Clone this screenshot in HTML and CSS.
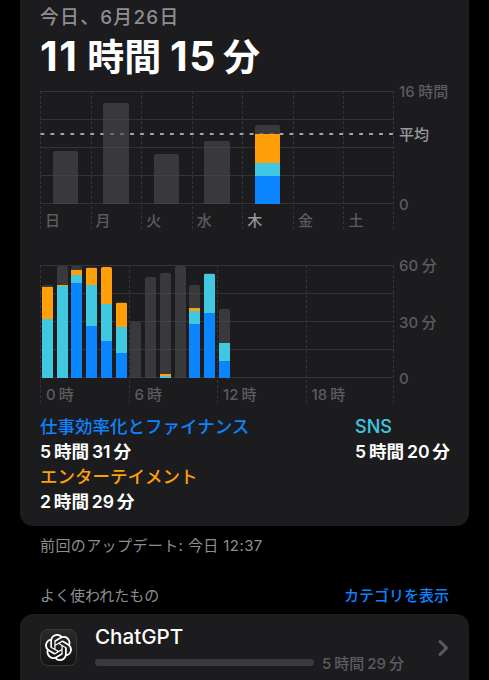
FILE: index.html
```
<!DOCTYPE html>
<html lang="ja">
<head>
    <meta charset="UTF-8">
    <meta name="viewport" content="width=device-width, initial-scale=1.0">
    <title>スクリーンタイム</title>
    <link rel="stylesheet" href="styles.css">
</head>
<body>
    <section class="card summary">
        <div class="date">今日、6月26日</div>
        <h1 class="total"><span class="num">11</span> 時間 <span class="num">15</span>&thinsp;分</h1>

        <div class="chart week">
            <div class="plot">
                <div class="columns" id="weekColumns"></div>
                <svg class="average-line" width="353" height="2"><path d="M0.5 1H353" stroke="#a5a5a9" stroke-width="2" stroke-dasharray="3.8 6.16"/></svg>
                <div class="bars" id="weekBars"></div>
            </div>
            <div class="axis">
                <span>16 時間</span>
                <span>0</span>
                <span class="average-label">平均</span>
            </div>
        </div>

        <div class="chart day">
            <div class="plot">
                <div class="columns" id="dayColumns"></div>
                <div class="bars" id="dayBars"></div>
            </div>
            <div class="axis">
                <span>60 分</span>
                <span>30 分</span>
                <span>0</span>
            </div>
        </div>

        <div class="categories">
            <div class="category">
                <div class="name productivity">仕事効率化とファイナンス</div>
                <div class="time">5 時間 31 分</div>
            </div>
            <div class="category">
                <div class="name social">SNS</div>
                <div class="time">5 時間 20 分</div>
            </div>
            <div class="category">
                <div class="name entertainment">エンターテイメント</div>
                <div class="time">2 時間 29 分</div>
            </div>
        </div>
    </section>

    <p class="updated">前回のアップデート: 今日 12:37</p>

    <div class="list-header">
        <span>よく使われたもの</span>
        <a class="toggle">カテゴリを表示</a>
    </div>

    <section class="card app">
        <div class="app-icon">
            <svg width="27" height="27" viewBox="0 0 24 24" fill="#fff"><path d="M22.2819 9.8211a5.9847 5.9847 0 0 0-.5157-4.9108 6.0462 6.0462 0 0 0-6.5098-2.9A6.0651 6.0651 0 0 0 4.9807 4.1818a5.9847 5.9847 0 0 0-3.9977 2.9 6.0462 6.0462 0 0 0 .7427 7.0966 5.98 5.98 0 0 0 .511 4.9107 6.051 6.051 0 0 0 6.5146 2.9001A5.9847 5.9847 0 0 0 13.2599 24a6.0557 6.0557 0 0 0 5.7718-4.2058 5.9894 5.9894 0 0 0 3.9977-2.9001 6.0557 6.0557 0 0 0-.7475-7.0729zm-9.022 12.6081a4.4755 4.4755 0 0 1-2.8764-1.0408l.1419-.0804 4.7783-2.7582a.7948.7948 0 0 0 .3927-.6813v-6.7369l2.02 1.1686a.071.071 0 0 1 .038.052v5.5826a4.504 4.504 0 0 1-4.4945 4.4944zm-9.6607-4.1254a4.4708 4.4708 0 0 1-.5346-3.0137l.142.0852 4.783 2.7582a.7712.7712 0 0 0 .7806 0l5.8428-3.3685v2.3324a.0804.0804 0 0 1-.0332.0615L9.74 19.9502a4.4992 4.4992 0 0 1-6.1408-1.6464zM2.3408 7.8956a4.485 4.485 0 0 1 2.3655-1.9728V11.6a.7664.7664 0 0 0 .3879.6765l5.8144 3.3543-2.0201 1.1685a.0757.0757 0 0 1-.071 0l-4.8303-2.7865A4.504 4.504 0 0 1 2.3408 7.872zm16.5963 3.8558L13.1038 8.364 15.1192 7.2a.0757.0757 0 0 1 .071 0l4.8303 2.7913a4.4944 4.4944 0 0 1-.6765 8.1042v-5.6772a.79.79 0 0 0-.407-.667zm2.0107-3.0231l-.142-.0852-4.7735-2.7818a.7759.7759 0 0 0-.7854 0L9.409 9.2297V6.8974a.0662.0662 0 0 1 .0284-.0615l4.8303-2.7866a4.4992 4.4992 0 0 1 6.6802 4.66zM8.3065 12.863l-2.02-1.1638a.0804.0804 0 0 1-.038-.0567V6.0742a4.4992 4.4992 0 0 1 7.3757-3.4537l-.142.0805L8.704 5.459a.7948.7948 0 0 0-.3927.6813zm1.0976-2.3654l2.602-1.4998 2.6069 1.4998v2.9994l-2.5974 1.4997-2.6067-1.4997Z"/></svg>
        </div>
        <div class="app-info">
            <div class="app-name">ChatGPT</div>
            <div class="usage">
                <div class="usage-bar"></div>
                <span class="usage-time">5 時間 29 分</span>
            </div>
        </div>
        <svg class="chevron" width="12" height="18" viewBox="0 0 12 18"><path d="M3 2.5L9.5 9L3 15.5" fill="none" stroke="#5b5b60" stroke-width="3" stroke-linecap="round" stroke-linejoin="round"/></svg>
    </section>

    <script>
        // bar segments from top to bottom: other, entertainment, social, productivity
        const segments = ['other', 'entertainment', 'social', 'productivity'];

        const week = [
            [53, 0, 0, 0],
            [101, 0, 0, 0],
            [50.5, 0, 0, 0],
            [63.5, 0, 0, 0],
            [8.5, 29, 13, 28.5],
            [0, 0, 0, 0],
            [0, 0, 0, 0]
        ];

        const day = [
            [2, 32.5, 59, 0],
            [19, 1, 92.5, 0],
            [3.5, 5.5, 7.5, 95.5],
            [1, 17, 41, 52],
            [0.5, 37, 37, 37],
            [0.5, 24.5, 25.5, 25.5],
            [56, 0, 0, 0],
            [101, 0, 0, 0],
            [101, 1.5, 2.5, 0],
            [112, 0, 0, 0],
            [23, 3, 13.5, 54],
            [1.5, 0, 39, 65],
            [34, 0, 18, 17.5]
        ];
        while (day.length < 24) {
            day.push([0, 0, 0, 0]);
        }

        function drawBars(id, data) {
            document.getElementById(id).innerHTML = data.map(values => {
                const parts = values.map((value, i) =>
                    value ? `<i class="${segments[i]}" style="height: ${value}px"></i>` : ''
                ).join('');
                return `<div class="slot"><div class="bar">${parts}</div></div>`;
            }).join('');
        }

        function drawColumns(id, labels, current) {
            document.getElementById(id).innerHTML = labels.map(label =>
                `<div class="column${label === current ? ' current' : ''}">${label}</div>`
            ).join('');
        }

        drawColumns('weekColumns', ['日', '月', '火', '水', '木', '金', '土'], '木');
        drawColumns('dayColumns', ['0 時', '6 時', '12 時', '18 時']);
        drawBars('weekBars', week);
        drawBars('dayBars', day);
    </script>
</body>
</html>
```
FILE: styles.css
```
* {
    box-sizing: border-box;
}

body {
    margin: 0;
    height: 680px;
    overflow: hidden;
    background: #000;
    color: #fff;
    font-family: Inter, "Noto Sans CJK JP", sans-serif;
    font-size: 15px;
}

.card {
    margin: 0 20px;
    background: #1c1c1e;
}

.summary {
    height: 526px;
    padding: 5px 20px 0;
    border-radius: 0 0 13px 13px;
}

.date {
    height: 26px;
    line-height: 26px;
    font-size: 18.8px;
    font-weight: 500;
    letter-spacing: 1.3px;
    color: #8e8e93;
}

.total {
    margin: 0;
    height: 50px;
    line-height: 51px;
    font-size: 37px;
    font-weight: 700;
    white-space: nowrap;
}

.num {
    font-size: 41px;
    letter-spacing: 1.6px;
}

.chart {
    display: flex;
    height: 139px;
}

.week {
    margin-top: 10px;
}

.day {
    margin-top: 35px;
}

.plot {
    position: relative;
    width: 354px;
    background: repeating-linear-gradient(#343437 0 1px, transparent 1px 28px) 0 0 / 100% 113px no-repeat;
}

.columns {
    display: flex;
    height: 139px;
    background: repeating-linear-gradient(#343437 0 3px, transparent 3px 5px) right / 1px 100% no-repeat;
}

.column {
    flex: 1;
    padding: 119px 0 0 6px;
    line-height: 22px;
    font-weight: 500;
    color: #5b5b60;
    word-spacing: -1px;
    white-space: nowrap;
    background: repeating-linear-gradient(#343437 0 3px, transparent 3px 5px) left / 1px 100% no-repeat;
}

.week .column {
    padding-left: 5px;
}

.column.current {
    color: #98989d;
}

.average-line {
    position: absolute;
    left: 0;
    top: 42px;
}

.bars {
    position: absolute;
    left: 0;
    top: 0;
    width: 354px;
    height: 113px;
    display: flex;
}

.slot {
    flex: 1;
    display: flex;
    align-items: flex-end;
    justify-content: center;
}

.bar {
    width: 50%;
    border-radius: 2px 2px 0 0;
    overflow: hidden;
}

.day .bar {
    width: 75%;
}

.bar i {
    display: block;
}

.bar .other {
    background: rgba(74, 74, 76, 0.65);
}

.bar .entertainment {
    background: #ff9f0a;
}

.bar .social {
    background: #40c8e0;
}

.bar .productivity {
    background: #0a84ff;
}

.axis {
    position: relative;
    display: flex;
    flex-direction: column;
    justify-content: space-between;
    height: 133px;
    margin: -9px 0 0 5px;
    line-height: 20px;
    font-weight: 500;
    color: #5b5b60;
    word-spacing: -0.5px;
    white-space: nowrap;
}

.average-label {
    position: absolute;
    left: 0;
    top: 43px;
    color: #98989d;
}

.categories {
    display: grid;
    grid-template-columns: 315px auto;
    margin-top: 11px;
    font-size: 18px;
    line-height: 25px;
    font-weight: 500;
    white-space: nowrap;
}

.category .time {
    height: 25px;
    line-height: 24px;
    font-weight: 600;
    font-size: 17.6px;
    word-spacing: -1.6px;
}

.category .name {
    height: 25px;
    line-height: 24px;
    font-size: 17.5px;
}

.name.productivity {
    color: #0a84ff;
}

.category .social {
    font-size: 18px;
    color: #40c8e0;
}

.name.entertainment {
    color: #ff9f0a;
}

.updated {
    margin: 9px 40px 0;
    line-height: 22px;
    letter-spacing: 0.4px;
    color: #8e8e93;
}

.list-header {
    display: flex;
    justify-content: space-between;
    margin: 28px 40px 0;
    line-height: 22px;
    color: #8e8e93;
}

.toggle {
    color: #0a84ff;
    font-weight: 500;
}

.app {
    display: flex;
    height: 90px;
    margin-top: 7px;
    padding: 0 20px;
    border-radius: 13px 13px 0 0;
}

.app-icon {
    display: flex;
    align-items: center;
    justify-content: center;
    width: 37px;
    height: 37px;
    margin-top: 15px;
    border: 1px solid #39393b;
    border-radius: 8px;
    background: linear-gradient(#2a2a2b, #121213);
}

.app-info {
    flex: 1;
    margin: 10px 0 0 18px;
}

.app-name {
    line-height: 26px;
    font-size: 20.6px;
    font-weight: 500;
}

.usage {
    display: flex;
    align-items: center;
    gap: 8px;
    height: 22px;
    margin-top: 1px;
}

.usage-bar {
    width: 219px;
    height: 7px;
    border-radius: 4px;
    background: #3a3a3c;
}

.usage-time {
    color: #5b5b60;
    font-weight: 500;
    word-spacing: -1px;
    white-space: nowrap;
}

.chevron {
    margin-top: 25px;
}
```
